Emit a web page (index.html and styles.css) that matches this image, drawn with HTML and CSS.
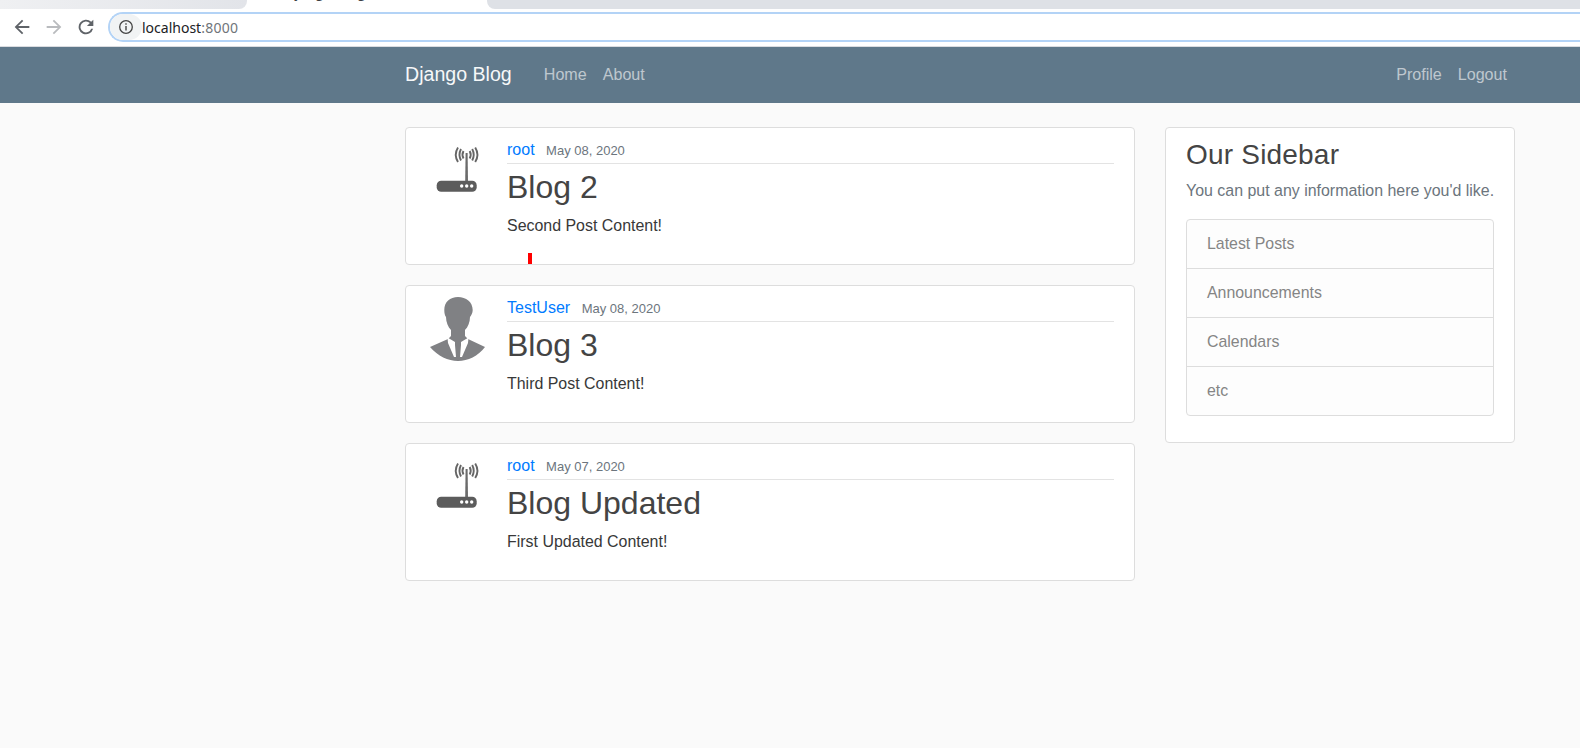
FILE: index.html
```html
<!DOCTYPE html>
<html lang="en">
<head>
<meta charset="utf-8">
<title>Django Blog</title>
<link rel="stylesheet" href="styles.css">
</head>
<body>
<div class="chrome">
  <div class="tabstrip">
    <div class="tab tab-left"></div>
    <div class="tab tab-active"><span class="tab-title">Django Blog</span></div>
    <div class="tab tab-right"></div>
  </div>
  <div class="toolbar">
    <svg class="tb-icon" viewBox="0 0 24 24"><path d="M20 11H7.8l5.6-5.6L12 4l-8 8 8 8 1.4-1.4L7.8 13H20z" fill="#5f6368"/></svg>
    <svg class="tb-icon" viewBox="0 0 24 24"><path d="M4 11h12.2l-5.6-5.6L12 4l8 8-8 8-1.400-1.400 5.600-5.600H4z" fill="#b9bbbe"/></svg>
    <svg class="tb-icon" viewBox="0 0 24 24"><path d="M17.65 6.35A8 8 0 1 0 19.73 14h-2.08a6 6 0 1 1-1.41-6.24L13 11h7V4z" fill="#5f6368"/></svg>
    <div class="omnibox">
      <span class="info"><svg viewBox="0 0 16 16" class="info-svg"><circle cx="8" cy="8" r="6.3" fill="none" stroke="#444" stroke-width="1.3"/><path d="M7.3 7h1.4v4.6H7.3zM7.3 4.3h1.4v1.5H7.3z" fill="#444"/></svg></span>
      <span class="url">localhost<span class="port">:8000</span></span>
    </div>
  </div>
</div>
<nav class="navbar">
  <div class="nav-inner">
    <a class="brand">Django Blog</a>
    <a class="nav-link">Home</a>
    <a class="nav-link">About</a>
    <span class="nav-spacer"></span>
    <a class="nav-link">Profile</a>
    <a class="nav-link">Logout</a>
  </div>
</nav>
<main class="container">
  <div class="posts">
    <article class="card post">
      <svg class="avatar" viewBox="0 0 64 64"><use href="#router"/></svg>
      <div class="post-body">
        <div class="meta"><a class="author">root</a><small class="date">May 08, 2020</small></div>
        <h2 class="title">Blog 2</h2>
        <p class="content">Second Post Content!</p>
      </div>
      <span class="marker"></span>
    </article>
    <article class="card post">
      <svg class="avatar" viewBox="0 0 64 64"><use href="#person"/></svg>
      <div class="post-body">
        <div class="meta"><a class="author">TestUser</a><small class="date">May 08, 2020</small></div>
        <h2 class="title">Blog 3</h2>
        <p class="content">Third Post Content!</p>
      </div>
    </article>
    <article class="card post">
      <svg class="avatar" viewBox="0 0 64 64"><use href="#router"/></svg>
      <div class="post-body">
        <div class="meta"><a class="author">root</a><small class="date">May 07, 2020</small></div>
        <h2 class="title">Blog Updated</h2>
        <p class="content">First Updated Content!</p>
      </div>
    </article>
  </div>
  <aside class="card sidebar">
    <h3 class="side-title">Our Sidebar</h3>
    <p class="side-text">You can put any information here you'd like.</p>
    <ul class="list">
      <li class="list-item">Latest Posts</li>
      <li class="list-item">Announcements</li>
      <li class="list-item">Calendars</li>
      <li class="list-item">etc</li>
    </ul>
  </aside>
</main>
<svg class="defs" width="0" height="0">
  <defs>
    <g id="router">
      <rect x="11.700" y="41.700" width="40" height="11" rx="4.500" fill="#5c5c5c"/>
      <path d="M40.600 14h2l.4 28h-2.800z" fill="#6b6b6b"/>
      <circle cx="36.700" cy="47" r="1.700" fill="#fff"/><circle cx="41.700" cy="47" r="1.700" fill="#fff"/><circle cx="46.700" cy="47" r="1.700" fill="#fff"/>
      <g fill="none" stroke="#666" stroke-width="1.900">
        <path d="M38.500 12Q36.500 15.750 38.500 19.500M44.700 12Q46.700 15.750 44.700 19.500"/>
        <path d="M36 10Q33 15.750 36 21.500M47.200 10Q50.200 15.750 47.200 21.500"/>
        <path d="M33 8.500Q28.500 15.750 33 23M50.200 8.500Q54.700 15.750 50.200 23"/>
      </g>
    </g>
    <g id="person">
      <path d="M33 0C25 0 19.300 5 19.300 13c0 3 .5 5.500 1.700 7 0 5 2 10 5 13v6l-3 3L5 50c8 9 18 14 28 14s20-5 27-14l-17-8-3-3v-6c3-3 5-8 5-13 1.200-1.500 2.700-4 2.700-7C47.700 5 41 0 33 0z" fill="#808184"/>
      <path d="M22.500 40.500l7.500 4.500v3l1 12h-2l-6-14zM43.500 40.500L36 45v3l-1 12h2l6-14z" fill="#fff"/>
    </g>
  </defs>
</svg>
</body>
</html>
```

FILE: styles.css
```css
* { box-sizing: border-box; }
html, body { margin: 0; padding: 0; }
body {
  width: 1580px;
  height: 748px;
  overflow: hidden;
  background: #fafafa;
  color: #333;
  font-family: "Liberation Sans", Arial, sans-serif;
  font-size: 16px;
  line-height: 1.5;
}
.defs { position: absolute; }
.chrome { height: 47px; background: #fff; border-bottom: 1px solid #dadce0; }
.tabstrip { display: flex; height: 9px; background: #fff; }
.tab { height: 9px; overflow: hidden; }
.tab-left { width: 247px; background: linear-gradient(90deg, #eff0f2, #e2e4e9); border-bottom-right-radius: 8px; }
.tab-active { width: 240px; background: #fff; padding-left: 38px; }
.tab-title { display: block; margin-top: -18px; font-family: "Noto Sans", sans-serif; font-size: 14px; line-height: 19px; color: #3c4043; white-space: nowrap; }
.tab-right { flex: 1; background: #dee1e6; border-bottom-left-radius: 8px; }
.toolbar { display: flex; align-items: center; height: 37px; padding: 0 0 1px 6px; }
.tb-icon { width: 22px; height: 22px; margin: 0 5px; flex: none; }
.omnibox {
  display: flex;
  align-items: center;
  flex: none;
  width: 1480px;
  height: 30px;
  margin-left: 6px;
  border: 2px solid #b3d3f6;
  border-right: 0;
  border-radius: 15px 0 0 15px;
  font-family: "Noto Sans", sans-serif;
  font-size: 14px;
  color: #202124;
}
.info { display: flex; align-items: center; justify-content: center; width: 32px; height: 26px; border-radius: 13px; background: #f1f3f4; margin-right: 0; }
.info-svg { width: 16px; height: 16px; }
.port { color: #70757a; letter-spacing: .25px; }
.navbar { height: 56px; background: #5f788a; }
.nav-inner { display: flex; align-items: center; height: 56px; padding: 0 8px 0 405px; width: 1515px; }
.brand { color: #fff; font-size: 19.6px; margin-right: 32px; opacity: .95; }
.nav-link { color: rgba(255,255,255,.6); margin-right: 16px; font-size: 16.1px; line-height: 24px; padding-bottom: 2px; }
.nav-spacer { flex: 1; }
.nav-link:last-child { margin-right: 0; }
.container { display: flex; align-items: flex-start; padding: 24px 0 0 405px; gap: 30px; }
.posts { display: flex; flex-direction: column; gap: 20px; width: 730px; }
.card { background: #fff; border: 1px solid #ddd; border-radius: 4px; }
.post { position: relative; display: flex; height: 138px; padding: 11px 20px 0 19px; }
.avatar { width: 64px; height: 64px; flex: none; margin: 0 18px 0 0; overflow: visible; }
.post-body { flex: 1; min-width: 0; }
.meta { border-bottom: 1px solid #e3e3e3; height: 25px; margin-bottom: 4px; line-height: 21px; white-space: nowrap; }
.author { color: #007bff; margin-right: 11.500px; }
.date { color: #6c757d; font-size: 13px; }
.title { margin: 0 0 8px; font-size: 32px; font-weight: 400; line-height: 38px; color: #444; }
.content { margin: 0; font-size: 15.95px; line-height: 24px; color: #383838; }
.marker { position: absolute; left: 122px; bottom: 0; width: 4px; height: 11px; background: #f00; }
.sidebar { width: 350px; height: 316px; padding: 7px 20px 0; }
.side-title { margin: 0; font-size: 28px; font-weight: 400; line-height: 40px; color: #444; letter-spacing: .2px; }
.side-text { margin: 4px 0 16px; color: #6c757d; font-size: 15.95px; line-height: 24px; white-space: nowrap; }
.list { list-style: none; margin: 0; padding: 0; border: 1px solid #ddd; border-radius: 4px; background: #fdfdfd; font-size: 15.9px; }
.list-item { height: 49px; padding: 0 20px; line-height: 47px; color: #858585; border-bottom: 1px solid #ddd; }
.list-item:last-child { border-bottom: 0; height: 48px; }
```
